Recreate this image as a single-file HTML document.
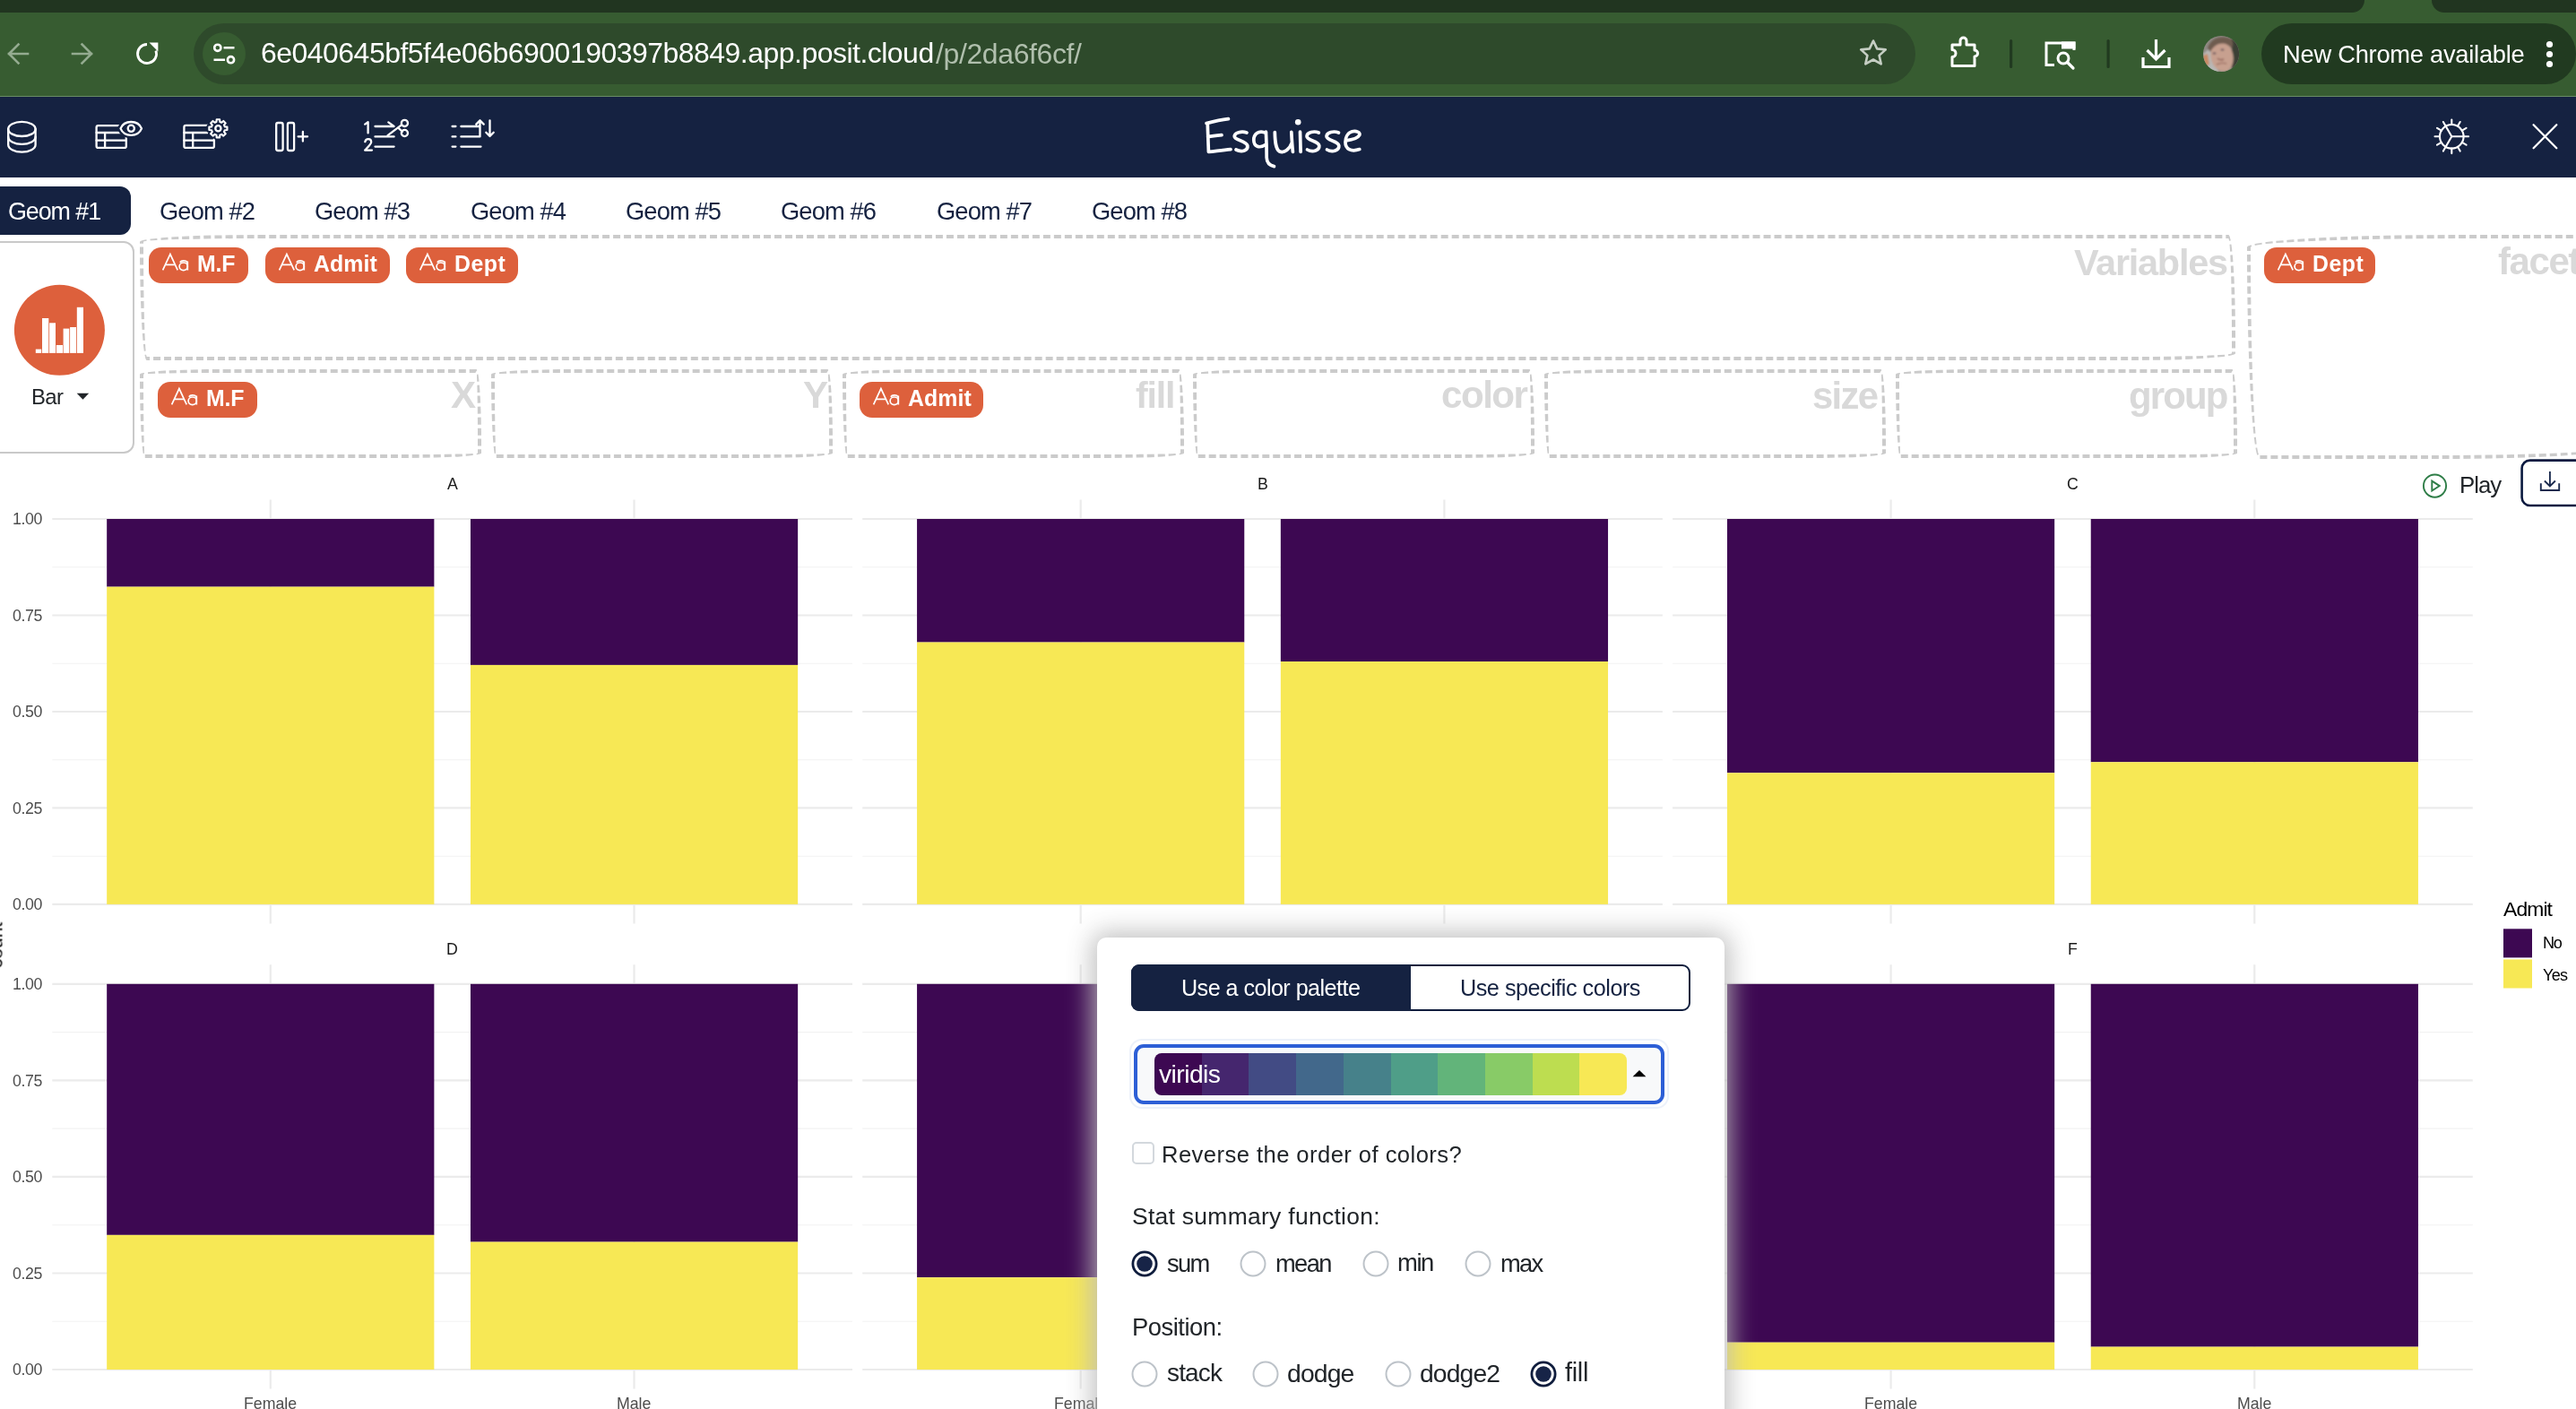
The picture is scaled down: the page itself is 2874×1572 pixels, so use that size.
<!DOCTYPE html>
<html><head><meta charset="utf-8"><style>
html,body{margin:0;padding:0;}
body{width:2874px;height:1572px;overflow:hidden;position:relative;background:#fff;font-family:"Liberation Sans",sans-serif;}
.a{position:absolute;box-sizing:border-box;}
.t{position:absolute;white-space:nowrap;line-height:1;will-change:transform;}
svg.a{overflow:visible}
</style></head><body>
<div class="a" style="left:0px;top:0px;width:2874px;height:107px;background:#375C31"></div><div class="a" style="left:0px;top:107px;width:2874px;height:1px;background:#6A8D64"></div><div class="a" style="left:0px;top:0px;width:2638px;height:14px;background:#213520;border-bottom-right-radius:14px"></div><div class="a" style="left:2713px;top:0px;width:300px;height:14px;background:#213520;border-bottom-left-radius:14px"></div><div class="a" style="left:216px;top:26px;width:1921px;height:68px;background:#2E4A2B;border-radius:34px"></div><div class="a" style="left:226px;top:36px;width:48px;height:48px;background:#375C31;border-radius:50%"></div><svg class="a" style="left:0;top:0" width="2874" height="108">
<g fill="none" stroke="#94AB90" stroke-width="2.6" stroke-linecap="square">
<path d="M10 60 H31 M20.5 49.5 L10 60 L20.5 70.5"/>
<path d="M102 60 H81 M91.5 49.5 L102 60 L91.5 70.5"/>
</g>
<g fill="none" stroke="#fff" stroke-width="2.8">
<path d="M164 49.5 A10.5 10.5 0 1 0 173.9 56.4"/>
</g>
<path d="M166.5 47.6 H176.4 V57.5 Z" fill="#fff"/>
<g fill="none" stroke="#fff" stroke-width="2.6">
<circle cx="242.8" cy="53.3" r="3.6"/><circle cx="257.5" cy="66.7" r="3.6"/>
<path d="M249.5 53.3 H261.5 M238.5 66.7 H251"/>
</g>
<path d="M2090 45.5 L2094.2 54.4 L2103.8 55.4 L2096.6 61.9 L2098.7 71.4 L2090 66.5 L2081.3 71.4 L2083.4 61.9 L2076.2 55.4 L2085.8 54.4 Z" fill="none" stroke="#C5CEC3" stroke-width="2.6" stroke-linejoin="round"/>
<path d="M2178 50 H2187 V45.5 A3.5 3.5 0 0 1 2194 45.5 V50 H2203 V56 A3.5 3.5 0 0 1 2203 63 V73.5 H2178 V63.5 A4 4 0 0 0 2178 55.5 Z" fill="none" stroke="#fff" stroke-width="3" stroke-linejoin="round"/>
<rect x="2242" y="44" width="3.2" height="32" rx="1.5" fill="#213A20"/>
<rect x="2350.5" y="44" width="3.2" height="32" rx="1.5" fill="#213A20"/>
<path d="M2292 72.5 H2283 V48 H2314 V56" fill="none" stroke="#fff" stroke-width="3"/>
<rect x="2300" y="46.5" width="15.5" height="8" fill="#fff"/>
<circle cx="2302" cy="65" r="6" fill="none" stroke="#fff" stroke-width="3"/>
<path d="M2306.5 69.5 L2313 76" stroke="#fff" stroke-width="3.2" stroke-linecap="round"/>
<g fill="none" stroke="#fff" stroke-width="3.2">
<path d="M2405.5 44 V66 M2395.5 56 L2405.5 66 L2415.5 56"/>
<path d="M2391 64 V74.5 H2420 V64"/>
</g>
<defs><clipPath id="avc"><circle cx="2478.1" cy="60" r="20.1"/></clipPath><filter id="avb"><feGaussianBlur stdDeviation="1.2"/></filter></defs>
<g clip-path="url(#avc)"><rect x="2456" y="38" width="45" height="45" fill="#8F8A84"/>
<g filter="url(#avb)">
<rect x="2490" y="38" width="12" height="45" fill="#3B3F35"/>
<path d="M2458 60 L2468 52 L2476 84 L2458 84 Z" fill="#B8B8B6"/>
<path d="M2458 62 L2463 60 L2465 72 L2459 74 Z" fill="#C98A63"/>
<ellipse cx="2479" cy="63" rx="12.5" ry="17" transform="rotate(-12 2479 63)" fill="#C7A08F"/>
<path d="M2463 54 C2466 42 2480 38 2490 44 C2492 48 2491 52 2490 54 C2484 46 2472 46 2466 58 Z" fill="#6E5B4F"/>
<ellipse cx="2479.5" cy="55.5" rx="2" ry="1" fill="#5A4A55"/><ellipse cx="2470.5" cy="59.5" rx="2" ry="1" fill="#5A4A55"/>
<path d="M2474 65 C2476 67 2479 67 2481 66" stroke="#8E5E55" stroke-width="1.6" fill="none"/>
<path d="M2473 72 C2477 70 2482 70 2484 71" stroke="#9A6C60" stroke-width="1.4" fill="none"/>
</g></g>
<rect x="2523" y="26" width="351" height="68" rx="34" fill="#213A20"/>
<circle cx="2844.5" cy="49.5" r="3.6" fill="#fff"/><circle cx="2844.5" cy="60.5" r="3.6" fill="#fff"/><circle cx="2844.5" cy="71.5" r="3.6" fill="#fff"/>
</svg><div class="t" style="left:290.50px;top:43.94px;font-size:31.96px;letter-spacing:-0.501px;font-weight:400;color:#fff;">6e040645bf5f4e06b6900190397b8849.app.posit.cloud</div><div class="t" style="left:1044.00px;top:43.93px;font-size:31.98px;letter-spacing:-0.374px;font-weight:400;color:#B0BFAD;">/p/2da6f6cf/</div><div class="t" style="left:2547.00px;top:46.67px;font-size:27.33px;letter-spacing:-0.273px;font-weight:400;color:#fff;">New Chrome available</div><div class="a" style="left:0px;top:108px;width:2874px;height:90px;background:#152241"></div><div class="a" style="left:-12px;top:208px;width:158px;height:54px;background:#152241;border-radius:12px"></div><div class="t" style="left:8.70px;top:222.56px;font-size:26.86px;letter-spacing:-1.062px;font-weight:400;color:#fff;">Geom #1</div><div class="t" style="left:178.00px;top:222.18px;font-size:27.31px;letter-spacing:-0.885px;font-weight:400;color:#152241;">Geom #2</div><div class="t" style="left:351.30px;top:222.18px;font-size:27.31px;letter-spacing:-0.885px;font-weight:400;color:#152241;">Geom #3</div><div class="t" style="left:524.60px;top:222.18px;font-size:27.31px;letter-spacing:-0.885px;font-weight:400;color:#152241;">Geom #4</div><div class="t" style="left:697.90px;top:222.18px;font-size:27.31px;letter-spacing:-0.885px;font-weight:400;color:#152241;">Geom #5</div><div class="t" style="left:871.20px;top:222.18px;font-size:27.31px;letter-spacing:-0.885px;font-weight:400;color:#152241;">Geom #6</div><div class="t" style="left:1044.50px;top:222.18px;font-size:27.31px;letter-spacing:-0.885px;font-weight:400;color:#152241;">Geom #7</div><div class="t" style="left:1217.80px;top:222.18px;font-size:27.31px;letter-spacing:-0.885px;font-weight:400;color:#152241;">Geom #8</div><svg class="a" style="left:0;top:108px" width="2874" height="90" viewBox="0 108 2874 90">
<g fill="none" stroke="#fff" stroke-width="2.3" stroke-linecap="round" stroke-linejoin="round">
<ellipse cx="24.4" cy="143.9" rx="15.2" ry="8.1"/>
<path d="M9.2 143.9 V161.5 A15.2 8.1 0 0 0 39.6 161.5 V143.9"/>
<path d="M9.2 152.7 A15.2 8.1 0 0 0 39.6 152.7"/>
<rect x="107.6" y="140.1" width="33.2" height="24.8" rx="2"/>
<path d="M107.6 148 H140.8 M107.6 156.7 H140.8 M117.1 148 V164.9"/>
<path d="M134.5 143.4 C138.5 133.5 154 133.5 158 143.4 C154 153.3 138.5 153.3 134.5 143.4 Z" fill="#152241" stroke="#152241" stroke-width="7"/>
<path d="M134.5 143.4 C138.5 133.5 154 133.5 158 143.4 C154 153.3 138.5 153.3 134.5 143.4 Z"/>
<circle cx="146.3" cy="143.3" r="3.6"/>
<rect x="205.4" y="139.9" width="33.5" height="25" rx="2"/>
<path d="M205.4 148 H238.9 M205.4 156.7 H238.9 M215.2 148 V164.9"/>
<path d="M250.75 141.38 L253.45 141.57 L253.45 145.03 L250.75 145.22 L249.96 147.14 L251.73 149.19 L249.29 151.63 L247.24 149.86 L245.32 150.65 L245.13 153.35 L241.67 153.35 L241.48 150.65 L239.56 149.86 L237.51 151.63 L235.07 149.19 L236.84 147.14 L236.05 145.22 L233.35 145.03 L233.35 141.57 L236.05 141.38 L236.84 139.46 L235.07 137.41 L237.51 134.97 L239.56 136.74 L241.48 135.95 L241.67 133.25 L245.13 133.25 L245.32 135.95 L247.24 136.74 L249.29 134.97 L251.73 137.41 L249.96 139.46 Z" fill="#152241" stroke="#152241" stroke-width="6"/>
<path d="M250.75 141.38 L253.45 141.57 L253.45 145.03 L250.75 145.22 L249.96 147.14 L251.73 149.19 L249.29 151.63 L247.24 149.86 L245.32 150.65 L245.13 153.35 L241.67 153.35 L241.48 150.65 L239.56 149.86 L237.51 151.63 L235.07 149.19 L236.84 147.14 L236.05 145.22 L233.35 145.03 L233.35 141.57 L236.05 141.38 L236.84 139.46 L235.07 137.41 L237.51 134.97 L239.56 136.74 L241.48 135.95 L241.67 133.25 L245.13 133.25 L245.32 135.95 L247.24 136.74 L249.29 134.97 L251.73 137.41 L249.96 139.46 Z" stroke-width="2.1"/>
<circle cx="243.4" cy="143.3" r="3.1"/>
<rect x="308.2" y="137" width="7.4" height="31" rx="2"/>
<rect x="320.9" y="137" width="7.2" height="31" rx="2"/>
<path d="M332.6 152.3 H343.1 M337.9 147 V157.6"/>
<path d="M407.2 138.6 L410.6 136.2 V148.4"/>
<path d="M407.3 158.2 C407.8 155.8 409.3 155.2 410.9 155.2 C413 155.2 414.2 156.6 414.2 158.4 C414.2 160.6 411 163.5 407.2 167.6 H415"/>
<path d="M418.5 141 H439.6 L433.3 136.4 M418.5 152.4 H439.6 M418.5 163.6 H439.6"/>
<path d="M432.5 151.2 L448 139.4 M444 142.4 L449 146.8"/>
<circle cx="451.4" cy="137.4" r="3.6"/><circle cx="451.4" cy="148.5" r="3.6"/>
<path d="M504.6 141 H508.4 M504.6 152.4 H508.4 M504.6 163.6 H508.4"/>
<path d="M514.4 141 H534.3 M514.4 152.4 H535.5 V134.4 M531.3 138.6 L535.5 134.3 L539.7 138.6 M514.4 163.6 H536.5"/>
<path d="M546.5 134.3 V152 M542.3 147.8 L546.5 152 L550.7 147.8"/>
</g>
<g fill="none" stroke="#fff" stroke-width="2.1" stroke-linecap="round">
<circle cx="2735.3" cy="152.3" r="13.3"/>
<path d="M2748.60 152.30 L2754.10 152.30 M2746.82 158.95 L2751.58 161.70 M2741.95 163.82 L2744.70 168.58 M2735.30 165.60 L2735.30 171.10 M2728.65 163.82 L2725.90 168.58 M2723.78 158.95 L2719.02 161.70 M2722.00 152.30 L2716.50 152.30 M2723.78 145.65 L2719.02 142.90 M2728.65 140.78 L2725.90 136.02 M2735.30 139.00 L2735.30 133.50 M2741.95 140.78 L2744.70 136.02 M2746.82 145.65 L2751.58 142.90 "/>
<path d="M2735.3 152.3 H2748.6 M2735.3 152.3 L2728.65 140.8 M2735.3 152.3 L2728.65 163.8"/>
<path d="M2826.6 139.3 L2852.3 165.3 M2852.3 139.3 L2826.6 165.3" stroke-width="2.3"/>
</g>
<g fill="none" stroke="#fff" stroke-width="3.7" stroke-linecap="round" stroke-linejoin="round">
<path d="M1346 137.6 C1354 135.5 1362 133.6 1370.5 132.6 M1347.3 138.5 C1347.6 149 1348 160 1348.4 169.4 C1356 168.6 1364 167.4 1373 166.6 M1347.6 152.6 C1353 151.8 1358 151.2 1363 150.6"/>
<path d="M1391 148 C1385 146 1377.5 148 1377.2 152 C1377 156.5 1390.5 157 1391.8 162.5 C1392.6 167.5 1386 170.5 1379 167"/>
<path d="M1412.6 148.5 C1404 144.5 1398.6 150 1398.8 156.5 C1399 163 1404.5 166.5 1412.8 161 M1412.4 147.2 C1413 158 1413.2 168 1413.2 176 C1413.4 181.5 1416.5 184.6 1421.5 185.6"/>
<path d="M1422.3 147.6 C1422.5 156 1422.8 166 1427.5 169 C1433 171.5 1439 166 1441.4 159 M1440.8 147.4 C1441.2 155 1441.6 162 1442.4 169.4"/>
<path d="M1450.5 147 C1450.7 155 1450.9 162 1451.1 169.4"/>
<path d="M1471.3 148 C1466 145.8 1458.2 147.6 1458 152 C1457.8 156.8 1471 157 1471.8 162.4 C1472.3 167.5 1465 170.6 1458.5 167"/>
<path d="M1493.5 148 C1488 145.8 1480.3 147.6 1480 152 C1479.8 156.8 1493 157 1493.8 162.4 C1494.3 167.5 1487 170.6 1480.5 167"/>
<path d="M1501.8 156.8 C1508 156 1515 154 1516.8 150.6 C1517.8 147.5 1513 145.6 1508.5 146.8 C1503 148.5 1501 154 1501 158.5 C1501 166 1507 170 1516.8 166.6"/>
</g>
<circle cx="1448.2" cy="136.3" r="3.3" fill="#fff"/>
</svg><div class="a" style="left:-14px;top:268.5px;width:163.5px;height:237px;border:2px solid #C9C9C9;border-radius:12px"></div><svg class="a" style="left:0;top:300px" width="160" height="160" viewBox="0 300 160 160">
<circle cx="66.4" cy="368.3" r="50.5" fill="#DD603C"/><rect x="39.8" y="389.6" width="6.4" height="4.3" fill="#fff"/><rect x="47.0" y="355.0" width="7.3" height="38.9" fill="#fff"/><rect x="55.1" y="360.3" width="6.9" height="33.6" fill="#fff"/><rect x="62.8" y="385.0" width="7.2" height="8.9" fill="#fff"/><rect x="70.6" y="366.6" width="6.7" height="27.3" fill="#fff"/><rect x="78.1" y="365.0" width="6.9" height="28.9" fill="#fff"/><rect x="85.8" y="342.8" width="7.2" height="51.1" fill="#fff"/>
<path d="M85.7 438.8 H99.2 L92.45 445.8 Z" fill="#212529"/>
</svg><div class="t" style="left:35.00px;top:431.26px;font-size:23.90px;letter-spacing:-0.597px;font-weight:400;color:#212529;">Bar</div><div class="a" style="left:156px;top:262px;width:2338px;height:140px;border:4px dashed #CBCBCB;border-radius:255px 15px 225px 15px/15px 225px 15px 255px"></div><div class="a" style="left:156.0px;top:411.6px;width:381px;height:99.6px;border:4px dashed #CBCBCB;border-radius:255px 15px 225px 15px/15px 225px 15px 255px"></div><div class="a" style="left:547.8px;top:411.6px;width:381px;height:99.6px;border:4px dashed #CBCBCB;border-radius:255px 15px 225px 15px/15px 225px 15px 255px"></div><div class="a" style="left:939.6px;top:411.6px;width:381px;height:99.6px;border:4px dashed #CBCBCB;border-radius:255px 15px 225px 15px/15px 225px 15px 255px"></div><div class="a" style="left:1331.4px;top:411.6px;width:381px;height:99.6px;border:4px dashed #CBCBCB;border-radius:255px 15px 225px 15px/15px 225px 15px 255px"></div><div class="a" style="left:1723.2px;top:411.6px;width:381px;height:99.6px;border:4px dashed #CBCBCB;border-radius:255px 15px 225px 15px/15px 225px 15px 255px"></div><div class="a" style="left:2115.0px;top:411.6px;width:381px;height:99.6px;border:4px dashed #CBCBCB;border-radius:255px 15px 225px 15px/15px 225px 15px 255px"></div><div class="a" style="left:2507px;top:262px;width:420px;height:249.5px;border:4px dashed #CBCBCB;border-radius:255px 15px 225px 15px/15px 225px 15px 255px"></div><div class="t" style="left:2314.00px;top:271.59px;font-size:41.47px;letter-spacing:-1.266px;font-weight:700;color:#D9D9D9;">Variables</div><div class="t" style="left:503.00px;top:420.31px;font-size:42.15px;letter-spacing:0.000px;font-weight:700;color:#D9D9D9;">X</div><div class="t" style="left:895.80px;top:420.31px;font-size:42.15px;letter-spacing:0.000px;font-weight:700;color:#D9D9D9;">Y</div><div class="t" style="left:1266.50px;top:421.17px;font-size:41.14px;letter-spacing:-1.170px;font-weight:700;color:#D9D9D9;">fill</div><div class="t" style="left:1608.00px;top:420.33px;font-size:42.13px;letter-spacing:-1.501px;font-weight:700;color:#D9D9D9;">color</div><div class="t" style="left:2022.00px;top:420.62px;font-size:41.80px;letter-spacing:-1.665px;font-weight:700;color:#D9D9D9;">size</div><div class="t" style="left:2374.50px;top:420.50px;font-size:41.93px;letter-spacing:-1.820px;font-weight:700;color:#D9D9D9;">group</div><div class="t" style="left:2786.60px;top:271.09px;font-size:42.06px;letter-spacing:-1.455px;font-weight:700;color:#D9D9D9;">facet</div><div class="a" style="left:166px;top:276px;width:110.8px;height:39.7px;background:#DD603C;border-radius:14px"></div><svg class="a" style="left:166.0px;top:276.0px" width="50" height="40" viewBox="0 0 50 40"><g fill="none" stroke="#fff" stroke-width="1.7" stroke-linejoin="miter"><path d="M15.6 25.4 L23.9 7.6 L32.2 25.4 M18.9 19.3 H28.9"/><ellipse cx="38.7" cy="21.3" rx="4.6" ry="4.3"/><path d="M43.3 15.6 V25.6 M34.8 16.8 C36 14.8 38.5 14.6 40.5 15 C42.6 15.5 43.3 17 43.3 18.5"/></g></svg><div class="t" style="left:219.80px;top:282.86px;font-size:24.85px;letter-spacing:-0.200px;font-weight:700;color:#fff;">M.F</div><div class="a" style="left:295.9px;top:276px;width:139.1px;height:39.7px;background:#DD603C;border-radius:14px"></div><svg class="a" style="left:295.9px;top:276.0px" width="50" height="40" viewBox="0 0 50 40"><g fill="none" stroke="#fff" stroke-width="1.7" stroke-linejoin="miter"><path d="M15.6 25.4 L23.9 7.6 L32.2 25.4 M18.9 19.3 H28.9"/><ellipse cx="38.7" cy="21.3" rx="4.6" ry="4.3"/><path d="M43.3 15.6 V25.6 M34.8 16.8 C36 14.8 38.5 14.6 40.5 15 C42.6 15.5 43.3 17 43.3 18.5"/></g></svg><div class="t" style="left:349.70px;top:282.86px;font-size:24.85px;letter-spacing:0.097px;font-weight:700;color:#fff;">Admit</div><div class="a" style="left:453px;top:276px;width:124.7px;height:39.7px;background:#DD603C;border-radius:14px"></div><svg class="a" style="left:453.0px;top:276.0px" width="50" height="40" viewBox="0 0 50 40"><g fill="none" stroke="#fff" stroke-width="1.7" stroke-linejoin="miter"><path d="M15.6 25.4 L23.9 7.6 L32.2 25.4 M18.9 19.3 H28.9"/><ellipse cx="38.7" cy="21.3" rx="4.6" ry="4.3"/><path d="M43.3 15.6 V25.6 M34.8 16.8 C36 14.8 38.5 14.6 40.5 15 C42.6 15.5 43.3 17 43.3 18.5"/></g></svg><div class="t" style="left:506.80px;top:282.86px;font-size:24.85px;letter-spacing:0.491px;font-weight:700;color:#fff;">Dept</div><div class="a" style="left:176px;top:426px;width:110.5px;height:39.7px;background:#DD603C;border-radius:14px"></div><svg class="a" style="left:176.0px;top:426.0px" width="50" height="40" viewBox="0 0 50 40"><g fill="none" stroke="#fff" stroke-width="1.7" stroke-linejoin="miter"><path d="M15.6 25.4 L23.9 7.6 L32.2 25.4 M18.9 19.3 H28.9"/><ellipse cx="38.7" cy="21.3" rx="4.6" ry="4.3"/><path d="M43.3 15.6 V25.6 M34.8 16.8 C36 14.8 38.5 14.6 40.5 15 C42.6 15.5 43.3 17 43.3 18.5"/></g></svg><div class="t" style="left:229.80px;top:432.86px;font-size:24.85px;letter-spacing:-0.200px;font-weight:700;color:#fff;">M.F</div><div class="a" style="left:959px;top:426px;width:138.4px;height:39.7px;background:#DD603C;border-radius:14px"></div><svg class="a" style="left:959.0px;top:426.0px" width="50" height="40" viewBox="0 0 50 40"><g fill="none" stroke="#fff" stroke-width="1.7" stroke-linejoin="miter"><path d="M15.6 25.4 L23.9 7.6 L32.2 25.4 M18.9 19.3 H28.9"/><ellipse cx="38.7" cy="21.3" rx="4.6" ry="4.3"/><path d="M43.3 15.6 V25.6 M34.8 16.8 C36 14.8 38.5 14.6 40.5 15 C42.6 15.5 43.3 17 43.3 18.5"/></g></svg><div class="t" style="left:1012.80px;top:432.86px;font-size:24.85px;letter-spacing:0.097px;font-weight:700;color:#fff;">Admit</div><div class="a" style="left:2525.7px;top:276px;width:124.8px;height:39.7px;background:#DD603C;border-radius:14px"></div><svg class="a" style="left:2525.7px;top:276.0px" width="50" height="40" viewBox="0 0 50 40"><g fill="none" stroke="#fff" stroke-width="1.7" stroke-linejoin="miter"><path d="M15.6 25.4 L23.9 7.6 L32.2 25.4 M18.9 19.3 H28.9"/><ellipse cx="38.7" cy="21.3" rx="4.6" ry="4.3"/><path d="M43.3 15.6 V25.6 M34.8 16.8 C36 14.8 38.5 14.6 40.5 15 C42.6 15.5 43.3 17 43.3 18.5"/></g></svg><div class="t" style="left:2579.50px;top:282.86px;font-size:24.85px;letter-spacing:0.491px;font-weight:700;color:#fff;">Dept</div><svg class="a" style="left:0;top:520px" width="2874" height="1052" viewBox="0 520 2874 1052"><line x1="58.3" x2="951.0" y1="955.2" y2="955.2" stroke="#F2F2F2" stroke-width="1.1"/><line x1="58.3" x2="951.0" y1="847.7" y2="847.7" stroke="#F2F2F2" stroke-width="1.1"/><line x1="58.3" x2="951.0" y1="740.2" y2="740.2" stroke="#F2F2F2" stroke-width="1.1"/><line x1="58.3" x2="951.0" y1="632.7" y2="632.7" stroke="#F2F2F2" stroke-width="1.1"/><line x1="58.3" x2="951.0" y1="1008.9" y2="1008.9" stroke="#EBEBEB" stroke-width="2.2"/><line x1="58.3" x2="951.0" y1="901.4" y2="901.4" stroke="#EBEBEB" stroke-width="2.2"/><line x1="58.3" x2="951.0" y1="794.0" y2="794.0" stroke="#EBEBEB" stroke-width="2.2"/><line x1="58.3" x2="951.0" y1="686.5" y2="686.5" stroke="#EBEBEB" stroke-width="2.2"/><line x1="58.3" x2="951.0" y1="579.0" y2="579.0" stroke="#EBEBEB" stroke-width="2.2"/><line x1="301.8" x2="301.8" y1="557.5" y2="1030.4" stroke="#EBEBEB" stroke-width="2.2"/><line x1="707.5" x2="707.5" y1="557.5" y2="1030.4" stroke="#EBEBEB" stroke-width="2.2"/><rect x="119.17" y="579.00" width="365.20" height="75.66" fill="#3D0852"/><rect x="119.17" y="654.66" width="365.20" height="354.24" fill="#F7E855"/><rect x="524.94" y="579.00" width="365.20" height="162.93" fill="#3D0852"/><rect x="524.94" y="741.93" width="365.20" height="266.97" fill="#F7E855"/><line x1="962.2" x2="1854.9" y1="955.2" y2="955.2" stroke="#F2F2F2" stroke-width="1.1"/><line x1="962.2" x2="1854.9" y1="847.7" y2="847.7" stroke="#F2F2F2" stroke-width="1.1"/><line x1="962.2" x2="1854.9" y1="740.2" y2="740.2" stroke="#F2F2F2" stroke-width="1.1"/><line x1="962.2" x2="1854.9" y1="632.7" y2="632.7" stroke="#F2F2F2" stroke-width="1.1"/><line x1="962.2" x2="1854.9" y1="1008.9" y2="1008.9" stroke="#EBEBEB" stroke-width="2.2"/><line x1="962.2" x2="1854.9" y1="901.4" y2="901.4" stroke="#EBEBEB" stroke-width="2.2"/><line x1="962.2" x2="1854.9" y1="794.0" y2="794.0" stroke="#EBEBEB" stroke-width="2.2"/><line x1="962.2" x2="1854.9" y1="686.5" y2="686.5" stroke="#EBEBEB" stroke-width="2.2"/><line x1="962.2" x2="1854.9" y1="579.0" y2="579.0" stroke="#EBEBEB" stroke-width="2.2"/><line x1="1205.7" x2="1205.7" y1="557.5" y2="1030.4" stroke="#EBEBEB" stroke-width="2.2"/><line x1="1611.4" x2="1611.4" y1="557.5" y2="1030.4" stroke="#EBEBEB" stroke-width="2.2"/><rect x="1023.07" y="579.00" width="365.20" height="137.57" fill="#3D0852"/><rect x="1023.07" y="716.57" width="365.20" height="292.33" fill="#F7E855"/><rect x="1428.84" y="579.00" width="365.20" height="159.06" fill="#3D0852"/><rect x="1428.84" y="738.06" width="365.20" height="270.84" fill="#F7E855"/><line x1="1866.1" x2="2758.8" y1="955.2" y2="955.2" stroke="#F2F2F2" stroke-width="1.1"/><line x1="1866.1" x2="2758.8" y1="847.7" y2="847.7" stroke="#F2F2F2" stroke-width="1.1"/><line x1="1866.1" x2="2758.8" y1="740.2" y2="740.2" stroke="#F2F2F2" stroke-width="1.1"/><line x1="1866.1" x2="2758.8" y1="632.7" y2="632.7" stroke="#F2F2F2" stroke-width="1.1"/><line x1="1866.1" x2="2758.8" y1="1008.9" y2="1008.9" stroke="#EBEBEB" stroke-width="2.2"/><line x1="1866.1" x2="2758.8" y1="901.4" y2="901.4" stroke="#EBEBEB" stroke-width="2.2"/><line x1="1866.1" x2="2758.8" y1="794.0" y2="794.0" stroke="#EBEBEB" stroke-width="2.2"/><line x1="1866.1" x2="2758.8" y1="686.5" y2="686.5" stroke="#EBEBEB" stroke-width="2.2"/><line x1="1866.1" x2="2758.8" y1="579.0" y2="579.0" stroke="#EBEBEB" stroke-width="2.2"/><line x1="2109.6" x2="2109.6" y1="557.5" y2="1030.4" stroke="#EBEBEB" stroke-width="2.2"/><line x1="2515.3" x2="2515.3" y1="557.5" y2="1030.4" stroke="#EBEBEB" stroke-width="2.2"/><rect x="1926.97" y="579.00" width="365.20" height="283.30" fill="#3D0852"/><rect x="1926.97" y="862.30" width="365.20" height="146.60" fill="#F7E855"/><rect x="2332.74" y="579.00" width="365.20" height="271.27" fill="#3D0852"/><rect x="2332.74" y="850.27" width="365.20" height="158.63" fill="#F7E855"/><line x1="58.3" x2="951.0" y1="1474.2" y2="1474.2" stroke="#F2F2F2" stroke-width="1.1"/><line x1="58.3" x2="951.0" y1="1366.7" y2="1366.7" stroke="#F2F2F2" stroke-width="1.1"/><line x1="58.3" x2="951.0" y1="1259.1" y2="1259.1" stroke="#F2F2F2" stroke-width="1.1"/><line x1="58.3" x2="951.0" y1="1151.6" y2="1151.6" stroke="#F2F2F2" stroke-width="1.1"/><line x1="58.3" x2="951.0" y1="1528.0" y2="1528.0" stroke="#EBEBEB" stroke-width="2.2"/><line x1="58.3" x2="951.0" y1="1420.5" y2="1420.5" stroke="#EBEBEB" stroke-width="2.2"/><line x1="58.3" x2="951.0" y1="1312.9" y2="1312.9" stroke="#EBEBEB" stroke-width="2.2"/><line x1="58.3" x2="951.0" y1="1205.3" y2="1205.3" stroke="#EBEBEB" stroke-width="2.2"/><line x1="58.3" x2="951.0" y1="1097.8" y2="1097.8" stroke="#EBEBEB" stroke-width="2.2"/><line x1="301.8" x2="301.8" y1="1076.3" y2="1549.5" stroke="#EBEBEB" stroke-width="2.2"/><line x1="707.5" x2="707.5" y1="1076.3" y2="1549.5" stroke="#EBEBEB" stroke-width="2.2"/><rect x="119.17" y="1097.80" width="365.20" height="280.06" fill="#3D0852"/><rect x="119.17" y="1377.86" width="365.20" height="150.14" fill="#F7E855"/><rect x="524.94" y="1097.80" width="365.20" height="287.80" fill="#3D0852"/><rect x="524.94" y="1385.60" width="365.20" height="142.40" fill="#F7E855"/><line x1="962.2" x2="1854.9" y1="1474.2" y2="1474.2" stroke="#F2F2F2" stroke-width="1.1"/><line x1="962.2" x2="1854.9" y1="1366.7" y2="1366.7" stroke="#F2F2F2" stroke-width="1.1"/><line x1="962.2" x2="1854.9" y1="1259.1" y2="1259.1" stroke="#F2F2F2" stroke-width="1.1"/><line x1="962.2" x2="1854.9" y1="1151.6" y2="1151.6" stroke="#F2F2F2" stroke-width="1.1"/><line x1="962.2" x2="1854.9" y1="1528.0" y2="1528.0" stroke="#EBEBEB" stroke-width="2.2"/><line x1="962.2" x2="1854.9" y1="1420.5" y2="1420.5" stroke="#EBEBEB" stroke-width="2.2"/><line x1="962.2" x2="1854.9" y1="1312.9" y2="1312.9" stroke="#EBEBEB" stroke-width="2.2"/><line x1="962.2" x2="1854.9" y1="1205.3" y2="1205.3" stroke="#EBEBEB" stroke-width="2.2"/><line x1="962.2" x2="1854.9" y1="1097.8" y2="1097.8" stroke="#EBEBEB" stroke-width="2.2"/><line x1="1205.7" x2="1205.7" y1="1076.3" y2="1549.5" stroke="#EBEBEB" stroke-width="2.2"/><line x1="1611.4" x2="1611.4" y1="1076.3" y2="1549.5" stroke="#EBEBEB" stroke-width="2.2"/><rect x="1023.07" y="1097.80" width="365.20" height="327.38" fill="#3D0852"/><rect x="1023.07" y="1425.18" width="365.20" height="102.82" fill="#F7E855"/><rect x="1428.84" y="1097.80" width="365.20" height="311.03" fill="#3D0852"/><rect x="1428.84" y="1408.83" width="365.20" height="119.17" fill="#F7E855"/><line x1="1866.1" x2="2758.8" y1="1474.2" y2="1474.2" stroke="#F2F2F2" stroke-width="1.1"/><line x1="1866.1" x2="2758.8" y1="1366.7" y2="1366.7" stroke="#F2F2F2" stroke-width="1.1"/><line x1="1866.1" x2="2758.8" y1="1259.1" y2="1259.1" stroke="#F2F2F2" stroke-width="1.1"/><line x1="1866.1" x2="2758.8" y1="1151.6" y2="1151.6" stroke="#F2F2F2" stroke-width="1.1"/><line x1="1866.1" x2="2758.8" y1="1528.0" y2="1528.0" stroke="#EBEBEB" stroke-width="2.2"/><line x1="1866.1" x2="2758.8" y1="1420.5" y2="1420.5" stroke="#EBEBEB" stroke-width="2.2"/><line x1="1866.1" x2="2758.8" y1="1312.9" y2="1312.9" stroke="#EBEBEB" stroke-width="2.2"/><line x1="1866.1" x2="2758.8" y1="1205.3" y2="1205.3" stroke="#EBEBEB" stroke-width="2.2"/><line x1="1866.1" x2="2758.8" y1="1097.8" y2="1097.8" stroke="#EBEBEB" stroke-width="2.2"/><line x1="2109.6" x2="2109.6" y1="1076.3" y2="1549.5" stroke="#EBEBEB" stroke-width="2.2"/><line x1="2515.3" x2="2515.3" y1="1076.3" y2="1549.5" stroke="#EBEBEB" stroke-width="2.2"/><rect x="1926.97" y="1097.80" width="365.20" height="399.91" fill="#3D0852"/><rect x="1926.97" y="1497.71" width="365.20" height="30.29" fill="#F7E855"/><rect x="2332.74" y="1097.80" width="365.20" height="404.82" fill="#3D0852"/><rect x="2332.74" y="1502.62" width="365.20" height="25.38" fill="#F7E855"/><rect x="2793" y="1036.3" width="32" height="32.1" fill="#3D0852"/><rect x="2793" y="1070.4" width="32" height="32.1" fill="#F7E855"/></svg><div class="t" style="left:498.74px;top:531.99px;font-size:17.73px;font-weight:400;color:#1A1A1A;">A</div><div class="t" style="left:1402.64px;top:531.99px;font-size:17.73px;font-weight:400;color:#1A1A1A;">B</div><div class="t" style="left:2306.05px;top:531.99px;font-size:17.73px;font-weight:400;color:#1A1A1A;">C</div><div class="t" style="left:13.50px;top:1001.19px;font-size:17.73px;letter-spacing:-0.336px;font-weight:400;color:#4D4D4D;">0.00</div><div class="t" style="left:13.50px;top:893.71px;font-size:17.73px;letter-spacing:-0.336px;font-weight:400;color:#4D4D4D;">0.25</div><div class="t" style="left:13.50px;top:786.24px;font-size:17.73px;letter-spacing:-0.336px;font-weight:400;color:#4D4D4D;">0.50</div><div class="t" style="left:13.50px;top:678.76px;font-size:17.73px;letter-spacing:-0.336px;font-weight:400;color:#4D4D4D;">0.75</div><div class="t" style="left:13.50px;top:571.29px;font-size:17.73px;letter-spacing:-0.336px;font-weight:400;color:#4D4D4D;">1.00</div><div class="t" style="left:498.25px;top:1050.79px;font-size:17.73px;font-weight:400;color:#1A1A1A;">D</div><div class="t" style="left:272.19px;top:1558.39px;font-size:17.73px;font-weight:400;color:#4D4D4D;">Female</div><div class="t" style="left:688.31px;top:1558.39px;font-size:17.73px;font-weight:400;color:#4D4D4D;">Male</div><div class="t" style="left:1402.64px;top:1050.79px;font-size:17.73px;font-weight:400;color:#1A1A1A;">E</div><div class="t" style="left:1176.09px;top:1558.39px;font-size:17.73px;font-weight:400;color:#4D4D4D;">Female</div><div class="t" style="left:1592.21px;top:1558.39px;font-size:17.73px;font-weight:400;color:#4D4D4D;">Male</div><div class="t" style="left:2307.03px;top:1050.79px;font-size:17.73px;font-weight:400;color:#1A1A1A;">F</div><div class="t" style="left:2079.99px;top:1558.39px;font-size:17.73px;font-weight:400;color:#4D4D4D;">Female</div><div class="t" style="left:2496.11px;top:1558.39px;font-size:17.73px;font-weight:400;color:#4D4D4D;">Male</div><div class="t" style="left:13.50px;top:1520.29px;font-size:17.73px;letter-spacing:-0.336px;font-weight:400;color:#4D4D4D;">0.00</div><div class="t" style="left:13.50px;top:1412.74px;font-size:17.73px;letter-spacing:-0.336px;font-weight:400;color:#4D4D4D;">0.25</div><div class="t" style="left:13.50px;top:1305.19px;font-size:17.73px;letter-spacing:-0.336px;font-weight:400;color:#4D4D4D;">0.50</div><div class="t" style="left:13.50px;top:1197.64px;font-size:17.73px;letter-spacing:-0.336px;font-weight:400;color:#4D4D4D;">0.75</div><div class="t" style="left:13.50px;top:1090.09px;font-size:17.73px;letter-spacing:-0.336px;font-weight:400;color:#4D4D4D;">1.00</div><div class="t" style="left:2792.50px;top:1002.52px;font-size:22.89px;letter-spacing:-0.874px;font-weight:400;color:#000;">Admit</div><div class="t" style="left:2837.30px;top:1043.47px;font-size:18.10px;letter-spacing:-1.437px;font-weight:400;color:#000;">No</div><div class="t" style="left:2837.00px;top:1078.51px;font-size:18.06px;letter-spacing:-0.724px;font-weight:400;color:#000;">Yes</div><div class="t" style="left:-35px;top:1044px;font-size:21px;color:#000;transform:rotate(-90deg);transform-origin:50% 50%;width:60px;text-align:center">count</div><svg class="a" style="left:2690px;top:505px" width="184" height="70" viewBox="2690 505 184 70">
<circle cx="2716.5" cy="542.1" r="12.6" fill="none" stroke="#2E7D47" stroke-width="1.9"/>
<path d="M2713.3 536.6 L2721.8 542.1 L2713.3 547.6 Z" fill="none" stroke="#2E7D47" stroke-width="1.9" stroke-linejoin="miter"/>
<rect x="2813.6" y="513.6" width="90" height="50.4" rx="9" fill="none" stroke="#0B1A40" stroke-width="2.6"/>
<g fill="none" stroke="#1B2A4E" stroke-width="1.9">
<path d="M2844.9 526 V542.5 M2838.9 536.5 L2844.9 542.5 L2850.9 536.5"/>
<path d="M2834.8 539.3 V547 H2855.2 V539.3"/>
</g>
</svg><div class="t" style="left:2744.00px;top:529.02px;font-size:25.84px;letter-spacing:-0.985px;font-weight:400;color:#212529;">Play</div><div class="a" style="left:1224px;top:1046px;width:700.4px;height:560px;background:#fff;border-radius:10px;box-shadow:0 0 28px 6px rgba(188,188,188,0.92)"></div><div class="a" style="left:1262px;top:1076.3px;width:624px;height:52px;border:2.4px solid #0F1D3D;border-radius:9px;overflow:hidden"></div><div class="a" style="left:1262px;top:1076.3px;width:312px;height:52px;background:#152241;border-radius:9px 0 0 9px"></div><div class="t" style="left:1318.00px;top:1089.73px;font-size:25.12px;letter-spacing:-0.526px;font-weight:400;color:#fff;">Use a color palette</div><div class="t" style="left:1628.50px;top:1089.63px;font-size:25.24px;letter-spacing:-0.494px;font-weight:400;color:#152241;">Use specific colors</div><div class="a" style="left:1261.5px;top:1161px;width:598px;height:73.6px;border-radius:12px;box-shadow:0 0 0 2px rgba(200,215,240,0.35)"></div><div class="a" style="left:1265.4px;top:1164.7px;width:591.2px;height:67.8px;background:#F8F9FA;border:4px solid #2D5FD6;border-radius:11px"></div><div class="a" style="left:1288px;top:1175.2px;width:527.2px;height:46.6px;border-radius:8px;overflow:hidden;display:flex"><div style="flex:1;background:#3D0852"></div><div style="flex:1;background:#45266E"></div><div style="flex:1;background:#424B84"></div><div style="flex:1;background:#42688B"></div><div style="flex:1;background:#46818A"></div><div style="flex:1;background:#4F9E88"></div><div style="flex:1;background:#62B47A"></div><div style="flex:1;background:#88CB67"></div><div style="flex:1;background:#BDDD50"></div><div style="flex:1;background:#F7E855"></div></div><div class="t" style="left:1293.00px;top:1184.05px;font-size:28.29px;letter-spacing:-0.553px;font-weight:400;color:#fff;">viridis</div><svg class="a" style="left:1815px;top:1188px" width="30" height="20" viewBox="1815 1188 30 20"><path d="M1821.6 1201.2 L1829 1194 L1836.4 1201.2 Z" fill="#000"/></svg><div class="a" style="left:1262.6px;top:1274.3px;width:25px;height:25px;border:2px solid #D3D8DD;border-radius:5px;background:#fff"></div><div class="t" style="left:1296.00px;top:1275.64px;font-size:25.58px;letter-spacing:0.446px;font-weight:400;color:#212529;">Reverse the order of colors?</div><div class="t" style="left:1262.60px;top:1344.20px;font-size:26.45px;letter-spacing:0.295px;font-weight:400;color:#212529;">Stat summary function:</div><div class="t" style="left:1262.60px;top:1466.83px;font-size:27.37px;letter-spacing:-0.470px;font-weight:400;color:#212529;">Position:</div><svg class="a" style="left:1260.0px;top:1393.0px" width="34" height="34" viewBox="-17 -17 34 34"><circle r="13.1" fill="#fff" stroke="#0F1D3D" stroke-width="2.8"/><circle r="8.8" fill="#172447"/></svg><svg class="a" style="left:1380.8px;top:1393.0px" width="34" height="34" viewBox="-17 -17 34 34"><circle r="13.5" fill="#fff" stroke="#BDC3C9" stroke-width="2"/></svg><svg class="a" style="left:1517.8px;top:1393.0px" width="34" height="34" viewBox="-17 -17 34 34"><circle r="13.5" fill="#fff" stroke="#BDC3C9" stroke-width="2"/></svg><svg class="a" style="left:1632.0px;top:1393.0px" width="34" height="34" viewBox="-17 -17 34 34"><circle r="13.5" fill="#fff" stroke="#BDC3C9" stroke-width="2"/></svg><svg class="a" style="left:1260.0px;top:1516.0px" width="34" height="34" viewBox="-17 -17 34 34"><circle r="13.5" fill="#fff" stroke="#BDC3C9" stroke-width="2"/></svg><svg class="a" style="left:1394.8px;top:1516.0px" width="34" height="34" viewBox="-17 -17 34 34"><circle r="13.5" fill="#fff" stroke="#BDC3C9" stroke-width="2"/></svg><svg class="a" style="left:1543.0px;top:1516.0px" width="34" height="34" viewBox="-17 -17 34 34"><circle r="13.5" fill="#fff" stroke="#BDC3C9" stroke-width="2"/></svg><svg class="a" style="left:1704.8px;top:1516.0px" width="34" height="34" viewBox="-17 -17 34 34"><circle r="13.1" fill="#fff" stroke="#0F1D3D" stroke-width="2.8"/><circle r="8.8" fill="#172447"/></svg><div class="t" style="left:1301.80px;top:1395.55px;font-size:27.34px;letter-spacing:-1.726px;font-weight:400;color:#212529;">sum</div><div class="t" style="left:1422.80px;top:1395.64px;font-size:27.24px;letter-spacing:-1.573px;font-weight:400;color:#212529;">mean</div><div class="t" style="left:1559.40px;top:1395.49px;font-size:27.42px;letter-spacing:-1.437px;font-weight:400;color:#212529;">min</div><div class="t" style="left:1673.60px;top:1395.58px;font-size:27.31px;letter-spacing:-1.743px;font-weight:400;color:#212529;">max</div><div class="t" style="left:1301.80px;top:1518.10px;font-size:28.00px;letter-spacing:-0.850px;font-weight:400;color:#212529;">stack</div><div class="t" style="left:1436.00px;top:1517.81px;font-size:28.33px;letter-spacing:-0.875px;font-weight:400;color:#212529;">dodge</div><div class="t" style="left:1583.60px;top:1517.87px;font-size:28.27px;letter-spacing:-0.866px;font-weight:400;color:#212529;">dodge2</div><div class="t" style="left:1746.00px;top:1517.34px;font-size:28.89px;letter-spacing:-0.291px;font-weight:400;color:#212529;">fill</div>
</body></html>
